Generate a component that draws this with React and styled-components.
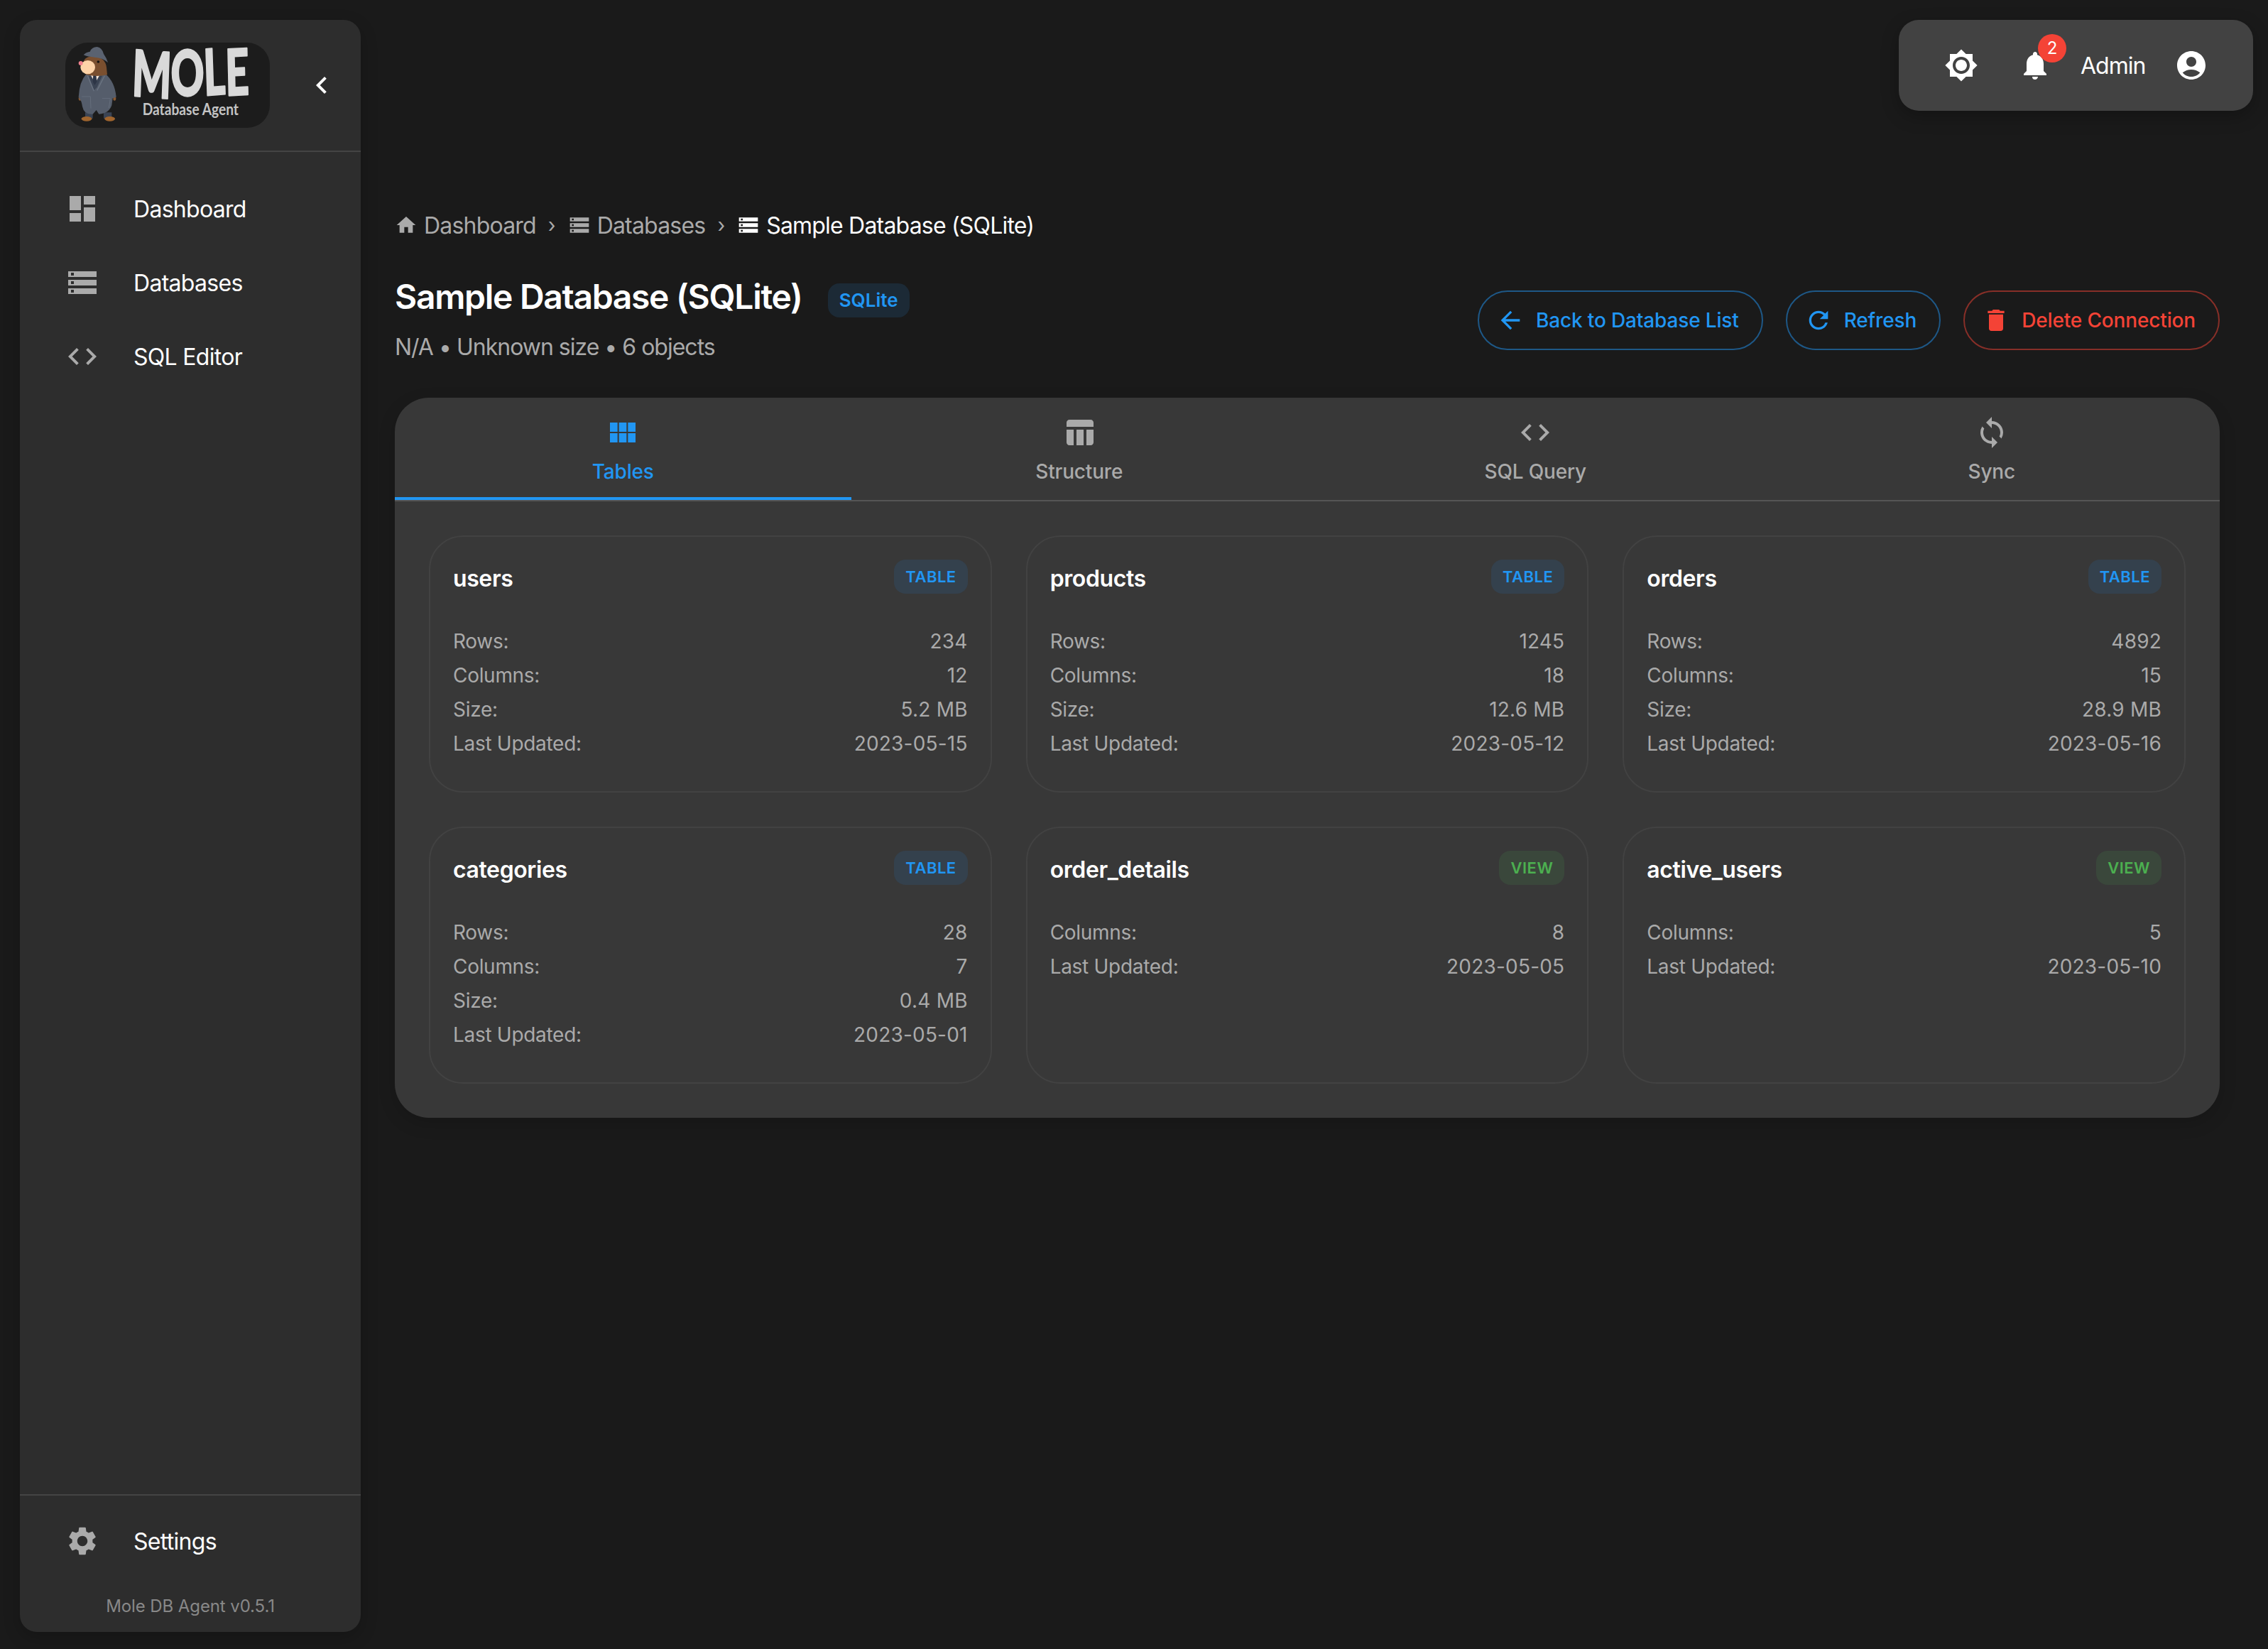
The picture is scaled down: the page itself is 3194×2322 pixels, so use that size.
import React from "react";
import styled, { createGlobalStyle } from "styled-components";
import {
  MdAccountCircle,
  MdArrowBack,
  MdBrightness7,
  MdChevronLeft,
  MdCode,
  MdDashboard,
  MdDelete,
  MdHome,
  MdNotifications,
  MdRefresh,
  MdSettings,
  MdStorage,
  MdSync,
  MdTableChart,
  MdViewModule,
} from "react-icons/md";

const GlobalStyle = createGlobalStyle`
  html, body {
    margin: 0;
    background: #1a1a1a;
    color: #fff;
    font-family: Inter, "Liberation Sans", sans-serif;
  }
  * { box-sizing: border-box; }
`;

const Layout = styled.div`
  display: flex;
  height: 2322px;
  padding: 28px 0 24px 28px;
`;

const Sidebar = styled.aside`
  flex: 0 0 480px;
  display: flex;
  flex-direction: column;
  background: #2d2d2d;
  border-radius: 24px;
  box-shadow: 0 8px 24px rgba(0, 0, 0, 0.2);
`;

const SidebarHeader = styled.div`
  display: flex;
  align-items: flex-start;
  height: 186px;
  padding: 32px 0 0 64px;
  border-bottom: 2px solid #444;
`;

const LogoBox = styled.div`
  width: 288px;
  height: 120px;
  background: #1c1c1c;
  border-radius: 32px;
  svg {
    display: block;
    overflow: visible;
  }
`;

const Collapse = styled.div`
  display: flex;
  margin: 36px 0 0 49px;
  color: #fff;
  font-size: 48px;
`;

const NavList = styled.nav`
  flex: 1;
  padding-top: 28px;
`;

const NavItem = styled.div`
  display: flex;
  align-items: center;
  height: 104px;
  padding-left: 64px;
  font-size: 32px;
  letter-spacing: -0.7px;
  color: #fff;
  svg {
    flex: none;
    font-size: 48px;
    color: #aaa;
    margin-right: 48px;
  }
`;

const SidebarFooter = styled.div`
  height: 194px;
  padding-top: 12px;
  border-top: 2px solid #444;
`;

const Version = styled.div`
  margin-top: 22px;
  text-align: center;
  font-size: 24px;
  line-height: 36px;
  letter-spacing: -0.1px;
  color: #888;
`;

const Main = styled.main`
  flex: 1;
  min-width: 0;
  padding-right: 21px;
`;

const TopBarRow = styled.div`
  display: flex;
  justify-content: flex-end;
`;

const TopBar = styled.header`
  display: flex;
  align-items: center;
  height: 128px;
  padding: 0 63px 0 48px;
  background: #424242;
  border-radius: 28px;
  box-shadow: 0 8px 24px rgba(0, 0, 0, 0.25);
`;

const IconButton = styled.div`
  position: relative;
  display: flex;
  align-items: center;
  justify-content: center;
  width: 80px;
  height: 80px;
  margin-right: 24px;
  font-size: 48px;
  color: #fff;
`;

const Badge = styled.span`
  position: absolute;
  top: -4px;
  left: 44px;
  width: 40px;
  height: 40px;
  border-radius: 50%;
  background: #f44336;
  font-size: 24px;
  line-height: 40px;
  text-align: center;
`;

const UserName = styled.span`
  width: 90px;
  margin-right: 42px;
  font-size: 32px;
  letter-spacing: -1px;
  white-space: nowrap;
`;

const UserIcon = styled.div`
  display: flex;
  font-size: 48px;
  color: #fff;
`;

const Content = styled.div`
  padding: 137px 47px 0 48px;
`;

const Breadcrumbs = styled.div`
  display: flex;
  align-items: center;
  height: 48px;
  font-size: 32px;
  color: #aaa;
`;

const Crumb = styled.div`
  display: flex;
  align-items: center;
  gap: 9px;
  letter-spacing: -0.8px;
  color: ${(p) => (p.$current ? "#fff" : "#aaa")};
  svg {
    font-size: 32px;
  }
`;

const CrumbSep = styled.span`
  margin: 0 17px;
  font-size: 28px;
`;

const TitleRow = styled.div`
  display: flex;
  align-items: center;
  justify-content: space-between;
  margin-top: 48px;
`;

const TitleLine = styled.div`
  display: flex;
  align-items: center;
  gap: 36px;
`;

const Title = styled.h1`
  margin: 0;
  font-size: 48px;
  line-height: 58px;
  font-weight: 600;
  letter-spacing: -1.3px;
`;

const TypeBadge = styled.span`
  margin-top: 10px;
  padding: 0 16px;
  height: 48px;
  line-height: 48px;
  border-radius: 16px;
  background: #1c2a36;
  color: #2196f3;
  font-size: 26px;
  font-weight: 600;
`;

const Subtitle = styled.div`
  margin-top: 18px;
  font-size: 32px;
  line-height: 48px;
  letter-spacing: -1px;
  color: #aaa;
`;

const Actions = styled.div`
  display: flex;
  gap: 32px;
`;

const ActionButton = styled.button`
  display: flex;
  align-items: center;
  gap: 16px;
  height: 84px;
  padding: 0 32px 0 24px;
  background: transparent;
  border: 2px solid
    ${(p) => (p.$danger ? "rgba(244, 67, 54, 0.5)" : "rgba(33, 150, 243, 0.5)")};
  border-radius: 42px;
  color: ${(p) => (p.$danger ? "#f44336" : "#2196f3")};
  font-family: inherit;
  font-size: 28px;
  font-weight: 500;
  letter-spacing: -0.15px;
  svg {
    font-size: 40px;
  }
`;

const Panel = styled.section`
  margin-top: 47px;
  background: #383838;
  border-radius: 48px;
  overflow: hidden;
  box-shadow: 0 8px 24px rgba(0, 0, 0, 0.15);
`;

const Tabs = styled.div`
  display: grid;
  grid-template-columns: repeat(4, 1fr);
  border-bottom: 2px solid #555;
`;

const Tab = styled.div`
  position: relative;
  display: flex;
  flex-direction: column;
  align-items: center;
  height: 144px;
  padding-top: 25px;
  color: ${(p) => (p.$active ? "#2196f3" : "#aaa")};
  font-size: 28px;
  font-weight: 500;
  letter-spacing: -0.2px;
  svg {
    font-size: 48px;
  }
  span {
    margin-top: 13px;
    line-height: 36px;
  }
  ${(p) =>
    p.$active &&
    `&::after {
      content: "";
      position: absolute;
      left: 0;
      right: 0;
      bottom: 0;
      height: 4px;
      background: #2196f3;
    }`}
`;

const CardGrid = styled.div`
  display: grid;
  grid-template-columns: repeat(3, 1fr);
  gap: 48px;
  padding: 48px;
`;

const Card = styled.article`
  height: 362px;
  padding: 32px 32px 0;
  border: 2px solid #424242;
  border-radius: 48px;
`;

const CardHeader = styled.div`
  display: flex;
  align-items: flex-start;
  justify-content: space-between;
  margin-bottom: 37px;
`;

const CardTitle = styled.h3`
  margin: 0;
  font-size: 32px;
  line-height: 54px;
  font-weight: 600;
  letter-spacing: -0.4px;
`;

const KindBadge = styled.span`
  height: 48px;
  padding: 0 16px;
  border-radius: 16px;
  background: ${(p) => (p.$kind === "VIEW" ? "#3a473b" : "#34414d")};
  color: ${(p) => (p.$kind === "VIEW" ? "#4caf50" : "#2196f3")};
  font-size: 22px;
  line-height: 48px;
  font-weight: 600;
  letter-spacing: 0.5px;
`;

const StatRow = styled.div`
  display: flex;
  justify-content: space-between;
  font-size: 28px;
  line-height: 48px;
  letter-spacing: 0.2px;
  color: #aaa;
`;

const StatLabel = styled.span`
  letter-spacing: -0.3px;
`;

function MoleLogo() {
  return (
    <svg width="288" height="120" viewBox="66 60 864 360">
      <path d="M150 355h32v25h-32zM228 355h34v25h-34z" fill="#3b4454" />
      <ellipse cx="156" cy="382" rx="22" ry="10" fill="#a0652e" />
      <ellipse cx="254" cy="382" rx="22" ry="10" fill="#a0652e" />
      <ellipse cx="128" cy="296" rx="6" ry="9" fill="#8a5a33" />
      <ellipse cx="274" cy="296" rx="6" ry="9" fill="#8a5a33" />
      <path
        d="M155 192Q125 225 122 290Q135 305 138 330Q145 365 182 362L197 345L208 362Q250 360 262 325L266 295L281 290Q275 225 235 192Q195 186 155 192Z"
        fill="#555d6b"
      />
      <path d="M165 200L187 262L200 248L222 200Z" fill="#3b4454" />
      <path d="M172 196L192 230L212 196Z" fill="#f4e4d8" />
      <path d="M184 196H196L199 225L190 240L182 225Z" fill="#2d3546" />
      <path d="M160 200L187 265M232 200L200 262" stroke="#6b7482" strokeWidth="4" fill="none" />
      <path d="M136 288h36l2 50M222 296h34l-6 40" stroke="#656e7c" strokeWidth="3" fill="none" />
      <path
        d="M145 135Q155 116 190 118Q235 124 240 165L243 196Q200 206 155 196Q130 170 145 135Z"
        fill="#7a4f2f"
      />
      <ellipse cx="161" cy="164" rx="31" ry="29" fill="#fdd3a8" />
      <circle cx="131" cy="147" r="9" fill="#f0808e" />
      <circle cx="205" cy="141" r="5.5" fill="#111" />
      <path
        d="M143 112Q150 102 170 98Q178 78 200 78Q222 82 228 108Q240 125 246 144Q225 125 190 122Q160 120 143 112Z"
        fill="#5a6270"
      />
      <text
        x="346"
        y="284"
        textLength="498"
        lengthAdjust="spacingAndGlyphs"
        rotate="3 0 -3 -2"
        fontFamily="Lato, sans-serif"
        fontWeight="900"
        fontSize="270"
        fill="#d9d9d9"
        stroke="#d9d9d9"
        strokeWidth="7"
        strokeLinejoin="round"
      >
        MOLE
      </text>
      <text
        x="392"
        y="366"
        textLength="406"
        lengthAdjust="spacingAndGlyphs"
        fontFamily="Lato, sans-serif"
        fontWeight="700"
        fontSize="66"
        fill="#c4c4c4"
      >
        Database Agent
      </text>
    </svg>
  );
}

const navItems = [
  { label: "Dashboard", icon: MdDashboard },
  { label: "Databases", icon: MdStorage },
  { label: "SQL Editor", icon: MdCode },
];

const tabs = [
  { label: "Tables", icon: MdViewModule, active: true },
  { label: "Structure", icon: MdTableChart },
  { label: "SQL Query", icon: MdCode },
  { label: "Sync", icon: MdSync },
];

const objects = [
  { name: "users", kind: "TABLE", rows: 234, columns: 12, size: "5.2 MB", updated: "2023-05-15" },
  { name: "products", kind: "TABLE", rows: 1245, columns: 18, size: "12.6 MB", updated: "2023-05-12" },
  { name: "orders", kind: "TABLE", rows: 4892, columns: 15, size: "28.9 MB", updated: "2023-05-16" },
  { name: "categories", kind: "TABLE", rows: 28, columns: 7, size: "0.4 MB", updated: "2023-05-01" },
  { name: "order_details", kind: "VIEW", columns: 8, updated: "2023-05-05" },
  { name: "active_users", kind: "VIEW", columns: 5, updated: "2023-05-10" },
];

function ObjectCard({ name, kind, rows, columns, size, updated }) {
  return (
    <Card>
      <CardHeader>
        <CardTitle>{name}</CardTitle>
        <KindBadge $kind={kind}>{kind}</KindBadge>
      </CardHeader>
      {rows !== undefined && (
        <StatRow>
          <StatLabel>Rows:</StatLabel>
          <span>{rows}</span>
        </StatRow>
      )}
      <StatRow>
        <StatLabel>Columns:</StatLabel>
        <span>{columns}</span>
      </StatRow>
      {size && (
        <StatRow>
          <StatLabel>Size:</StatLabel>
          <span>{size}</span>
        </StatRow>
      )}
      <StatRow>
        <StatLabel>Last Updated:</StatLabel>
        <span>{updated}</span>
      </StatRow>
    </Card>
  );
}

export default function App() {
  return (
    <>
      <GlobalStyle />
      <Layout>
        <Sidebar>
          <SidebarHeader>
            <LogoBox>
              <MoleLogo />
            </LogoBox>
            <Collapse>
              <MdChevronLeft />
            </Collapse>
          </SidebarHeader>
          <NavList>
            {navItems.map(({ label, icon: Icon }) => (
              <NavItem key={label}>
                <Icon />
                {label}
              </NavItem>
            ))}
          </NavList>
          <SidebarFooter>
            <NavItem>
              <MdSettings />
              Settings
            </NavItem>
            <Version>Mole DB Agent v0.5.1</Version>
          </SidebarFooter>
        </Sidebar>
        <Main>
          <TopBarRow>
            <TopBar>
              <IconButton>
                <MdBrightness7 />
              </IconButton>
              <IconButton>
                <MdNotifications />
                <Badge>2</Badge>
              </IconButton>
              <UserName>Admin</UserName>
              <UserIcon>
                <MdAccountCircle />
              </UserIcon>
            </TopBar>
          </TopBarRow>
          <Content>
            <Breadcrumbs>
              <Crumb>
                <MdHome />
                Dashboard
              </Crumb>
              <CrumbSep>›</CrumbSep>
              <Crumb>
                <MdStorage />
                Databases
              </Crumb>
              <CrumbSep>›</CrumbSep>
              <Crumb $current>
                <MdStorage />
                Sample Database (SQLite)
              </Crumb>
            </Breadcrumbs>
            <TitleRow>
              <div>
                <TitleLine>
                  <Title>Sample Database (SQLite)</Title>
                  <TypeBadge>SQLite</TypeBadge>
                </TitleLine>
                <Subtitle>N/A • Unknown size • 6 objects</Subtitle>
              </div>
              <Actions>
                <ActionButton>
                  <MdArrowBack />
                  Back to Database List
                </ActionButton>
                <ActionButton>
                  <MdRefresh />
                  Refresh
                </ActionButton>
                <ActionButton $danger>
                  <MdDelete />
                  Delete Connection
                </ActionButton>
              </Actions>
            </TitleRow>
            <Panel>
              <Tabs>
                {tabs.map(({ label, icon: Icon, active }) => (
                  <Tab key={label} $active={active}>
                    <Icon />
                    <span>{label}</span>
                  </Tab>
                ))}
              </Tabs>
              <CardGrid>
                {objects.map((o) => (
                  <ObjectCard key={o.name} {...o} />
                ))}
              </CardGrid>
            </Panel>
          </Content>
        </Main>
      </Layout>
    </>
  );
}
